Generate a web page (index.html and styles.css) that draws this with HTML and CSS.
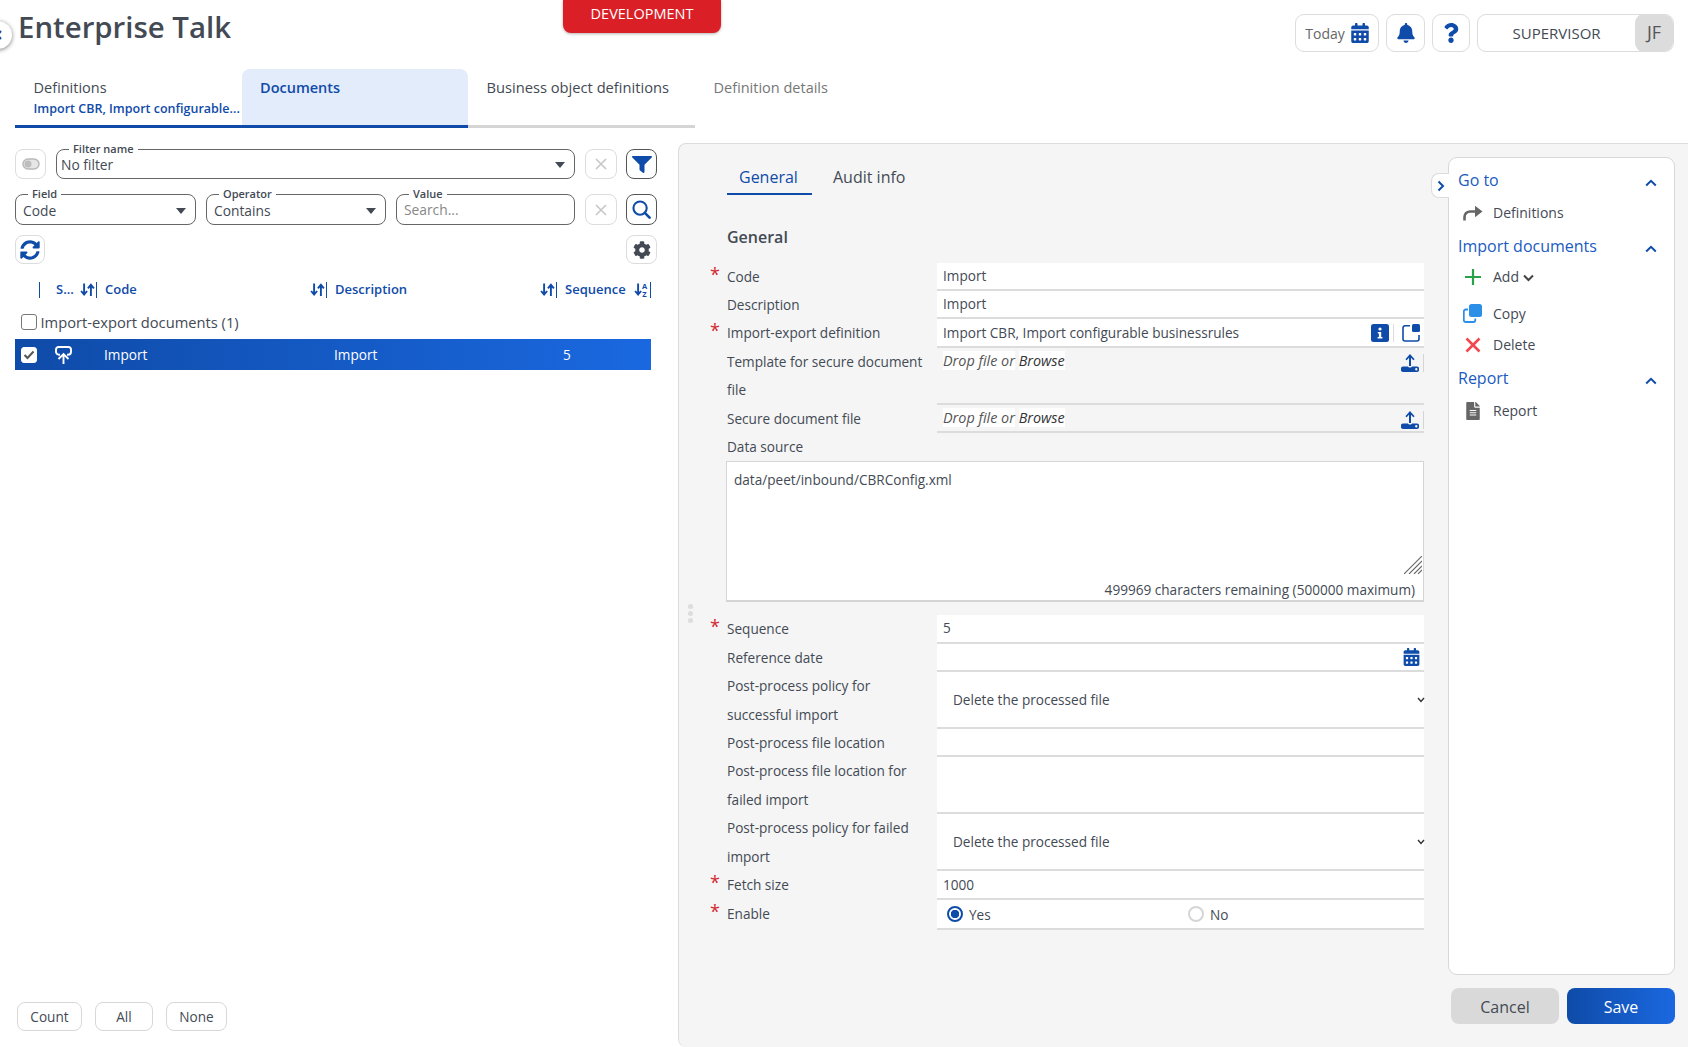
FILE: index.html
```html
<!DOCTYPE html>
<html lang="en">

<head>
    <meta charset="UTF-8">
    <meta name="viewport" content="width=device-width, initial-scale=1.0">
    <title>Enterprise Talk</title>
    <link rel="stylesheet" href="styles.css">
</head>

<body>
    <!-- Icons -->
    <svg class="icon-defs" xmlns="http://www.w3.org/2000/svg">
        <symbol id="i-calendar" viewBox="0 0 448 512"><path d="M0 464c0 26.5 21.5 48 48 48h352c26.5 0 48-21.5 48-48V192H0v272zm320-196c0-6.6 5.4-12 12-12h40c6.6 0 12 5.4 12 12v40c0 6.6-5.4 12-12 12h-40c-6.6 0-12-5.4-12-12v-40zm0 128c0-6.6 5.4-12 12-12h40c6.6 0 12 5.4 12 12v40c0 6.6-5.4 12-12 12h-40c-6.6 0-12-5.4-12-12v-40zM192 268c0-6.6 5.4-12 12-12h40c6.6 0 12 5.4 12 12v40c0 6.6-5.4 12-12 12h-40c-6.6 0-12-5.4-12-12v-40zm0 128c0-6.6 5.4-12 12-12h40c6.6 0 12 5.4 12 12v40c0 6.6-5.4 12-12 12h-40c-6.6 0-12-5.4-12-12v-40zM64 268c0-6.6 5.4-12 12-12h40c6.6 0 12 5.4 12 12v40c0 6.6-5.4 12-12 12H76c-6.6 0-12-5.4-12-12v-40zm0 128c0-6.6 5.4-12 12-12h40c6.6 0 12 5.4 12 12v40c0 6.6-5.4 12-12 12H76c-6.6 0-12-5.4-12-12v-40zM400 64h-48V16c0-8.8-7.2-16-16-16h-32c-8.8 0-16 7.2-16 16v48H160V16c0-8.8-7.2-16-16-16h-32c-8.8 0-16 7.2-16 16v48H48C21.5 64 0 85.5 0 112v48h448v-48c0-26.5-21.5-48-48-48z"/></symbol>
        <symbol id="i-sort" viewBox="0 0 16 16"><path d="M4.6 1.5v10.2M1.6 9l3 3.6 3-3.6M11.4 14V3.5M8.4 6.4l3-3.6 3 3.6" fill="none" stroke="currentColor" stroke-width="1.9"/></symbol>
        <symbol id="i-upload" viewBox="0 0 18 18"><path d="M9 0l4.6 5.2-1.3 1.1L10 3.8V12H8V3.8L5.7 6.3 4.4 5.2z"/><path d="M2.500 12.500H7c.3.7 1 1 2 1s1.700-.3 2-1h4.500a2.700 2.700 0 0 1 0 5.500h-13a2.700 2.700 0 0 1 0-5.500zm12.800 1.600a1.200 1.200 0 1 0 0 2.400 1.200 1.200 0 0 0 0-2.400z" fill-rule="evenodd"/></symbol>
        <symbol id="i-up" viewBox="0 0 12 8"><path d="M1.2 6.500L6 1.800l4.800 4.700" fill="none" stroke="currentColor" stroke-width="2"/></symbol>
        <symbol id="i-x" viewBox="0 0 12 12"><path d="M1 1l10 10M11 1L1 11" fill="none" stroke="currentColor" stroke-width="1.7"/></symbol>
    </svg>

    <div class="app">
        <!-- Header -->
        <header class="topbar">
            <span class="back-circle">
                <svg width="6" height="10" viewBox="0 0 6 10"><path d="M5 1L1.500 5 5 9" fill="none" stroke="#0f4ba8" stroke-width="2"/></svg>
            </span>
            <h1>Enterprise Talk</h1>
            <div class="env-badge">DEVELOPMENT</div>
            <div class="top-actions">
                <div class="top-btn today">Today <svg class="ico-18"><use href="#i-calendar"/></svg></div>
                <div class="top-btn bell">
                    <svg class="ico-18" viewBox="0 0 448 512"><path d="M224 512c35.32 0 63.97-28.65 63.97-64H160.03c0 35.35 28.65 64 63.97 64zm215.39-149.71c-19.32-20.76-55.47-51.99-55.47-154.29 0-77.7-54.48-139.9-127.94-155.16V32c0-17.67-14.32-32-31.98-32s-31.98 14.33-31.98 32v20.84C118.56 68.1 64.08 130.3 64.08 208c0 102.3-36.15 133.53-55.47 154.29-6 6.45-8.66 14.16-8.61 21.71.11 16.4 12.98 32 32.1 32h383.8c19.12 0 32-15.6 32.1-32 .05-7.55-2.61-15.27-8.61-21.71z"/></svg>
                </div>
                <div class="top-btn help">
                    <svg class="ico-18" viewBox="0 0 384 512"><path d="M202.021 0C122.202 0 70.503 32.703 29.914 91.026c-7.363 10.58-5.093 25.086 5.178 32.874l43.138 32.709c10.373 7.865 25.132 6.026 33.253-4.148 25.049-31.381 43.63-49.449 82.757-49.449 30.764 0 68.816 19.799 68.816 49.631 0 22.552-18.617 34.134-48.993 51.164-35.423 19.86-82.299 44.576-82.299 106.405V320c0 13.255 10.745 24 24 24h72.471c13.255 0 24-10.745 24-24v-5.773c0-42.86 125.268-44.645 125.268-160.627C377.504 66.256 286.902 0 202.021 0zM192 373.459c-38.196 0-69.271 31.075-69.271 69.271 0 38.195 31.075 69.27 69.271 69.27s69.271-31.075 69.271-69.271-31.075-69.27-69.271-69.27z"/></svg>
                </div>
                <div class="top-btn user">
                    <span class="user-name">SUPERVISOR</span>
                    <span class="user-initials">JF</span>
                </div>
            </div>
        </header>

        <!-- Main tabs -->
        <nav class="main-tabs">
            <div class="main-tab done">
                <div>Definitions</div>
                <div class="sub">Import CBR, Import configurable...</div>
            </div>
            <div class="main-tab active">Documents</div>
            <div class="main-tab wide">Business object definitions</div>
            <div class="main-tab muted">Definition details</div>
        </nav>

        <div class="content">
            <!-- List side -->
            <section class="list-pane">
                <div class="filter-row first">
                    <div class="square-btn toggle">
                        <svg width="18" height="12" viewBox="0 0 18 12"><rect x="1" y="1" width="16" height="10" rx="5" fill="#e6e6e6" stroke="#b9b9b9" stroke-width="1.5"/><circle cx="6" cy="6" r="3.5" fill="#bdbdbd"/></svg>
                    </div>
                    <div class="outline-field grow">
                        <span class="float-label">Filter name</span>
                        <span>No filter</span>
                        <span class="caret"></span>
                    </div>
                    <div class="square-btn clear"><svg width="12" height="12"><use href="#i-x"/></svg></div>
                    <div class="square-btn strong">
                        <svg width="20" height="17" viewBox="0 0 20 17"><path d="M1 0h18c.9 0 1.300 1 .7 1.600L12.500 8.800V16c0 .8-.8 1.200-1.500.7L8 14.400c-.3-.2-.5-.5-.5-.8V8.800L.3 1.600C-.3 1 .1 0 1 0z"/></svg>
                    </div>
                </div>
                <div class="filter-row second">
                    <div class="outline-field field-col field-name">
                        <span class="float-label">Field</span>
                        <span>Code</span>
                        <span class="caret"></span>
                    </div>
                    <div class="outline-field field-col field-op">
                        <span class="float-label">Operator</span>
                        <span>Contains</span>
                        <span class="caret"></span>
                    </div>
                    <div class="outline-field field-col field-value">
                        <span class="float-label">Value</span>
                        <span class="placeholder">Search...</span>
                    </div>
                    <div class="square-btn clear"><svg width="12" height="12"><use href="#i-x"/></svg></div>
                    <div class="square-btn strong">
                        <svg width="19" height="19" viewBox="0 0 20 20"><circle cx="8.5" cy="8.5" r="7" fill="none" stroke="currentColor" stroke-width="2.2"/><path d="M13.5 13.5l5 5" stroke="currentColor" stroke-width="2.8" stroke-linecap="round"/></svg>
                    </div>
                </div>
                <div class="tool-row">
                    <div class="square-btn refresh">
                        <svg width="20" height="20" viewBox="0 0 512 512"><path d="M370.72 133.28C339.458 104.008 298.888 87.962 255.848 88c-77.458.068-144.328 53.178-162.791 126.85-1.344 5.363-6.122 9.15-11.651 9.15H24.103c-7.498 0-13.194-6.807-11.807-14.176C33.933 94.924 134.813 8 256 8c66.448 0 126.791 26.136 171.315 68.685L463.03 40.97C478.149 25.851 504 36.559 504 57.941V192c0 13.255-10.745 24-24 24H345.941c-21.382 0-32.09-25.851-16.971-40.971l41.75-41.749zM32 296h134.059c21.382 0 32.09 25.851 16.971 40.971l-41.75 41.75c31.262 29.273 71.835 45.319 114.876 45.28 77.418-.07 144.315-53.144 162.787-126.849 1.344-5.363 6.122-9.15 11.651-9.15h57.304c7.498 0 13.194 6.807 11.807 14.176C478.067 417.076 377.187 504 256 504c-66.448 0-126.791-26.136-171.315-68.685L48.97 471.03C33.851 486.149 8 475.441 8 454.059V320c0-13.255 10.745-24 24-24z"/></svg>
                    </div>
                    <div class="square-btn settings">
                        <svg width="18" height="18" viewBox="0 0 512 512"><path d="M487.4 315.7l-42.6-24.6c4.3-23.2 4.3-47 0-70.2l42.6-24.6c4.9-2.8 7.1-8.6 5.5-14-11.1-35.6-30-67.8-54.7-94.6-3.8-4.1-10-5.1-14.8-2.3L380.8 110c-17.9-15.4-38.5-27.3-60.8-35.1V25.8c0-5.6-3.9-10.5-9.4-11.7-36.7-8.2-74.3-7.8-109.2 0-5.5 1.2-9.4 6.1-9.4 11.7V75c-22.2 7.9-42.8 19.8-60.8 35.1L88.7 85.5c-4.9-2.8-11-1.9-14.8 2.3-24.7 26.7-43.6 58.9-54.7 94.6-1.7 5.4.6 11.2 5.5 14L67.3 221c-4.3 23.2-4.3 47 0 70.2l-42.6 24.6c-4.9 2.8-7.1 8.6-5.5 14 11.1 35.6 30 67.8 54.7 94.6 3.8 4.1 10 5.1 14.8 2.3l42.6-24.6c17.9 15.4 38.5 27.3 60.8 35.1v49.2c0 5.6 3.9 10.5 9.4 11.7 36.7 8.2 74.3 7.8 109.2 0 5.5-1.2 9.4-6.1 9.4-11.7v-49.2c22.2-7.9 42.8-19.8 60.8-35.1l42.6 24.6c4.9 2.8 11 1.9 14.8-2.3 24.7-26.7 43.6-58.9 54.7-94.6 1.5-5.5-.7-11.3-5.6-14.1zM256 336c-44.1 0-80-35.9-80-80s35.9-80 80-80 80 35.9 80 80-35.9 80-80 80z"/></svg>
                    </div>
                </div>

                <div class="grid-head">
                    <div class="head-cell"></div>
                    <div class="head-cell status">S...<svg class="sort"><use href="#i-sort"/></svg></div>
                    <div class="head-cell">Code<svg class="sort"><use href="#i-sort"/></svg></div>
                    <div class="head-cell">Description<svg class="sort"><use href="#i-sort"/></svg></div>
                    <div class="head-cell">Sequence
                        <svg class="sort" viewBox="0 0 16 16"><path d="M4.6 1.5v10.2M1.6 9l3 3.6 3-3.6" fill="none" stroke="currentColor" stroke-width="1.9"/><text x="8.6" y="7" font-size="7.5" font-weight="700" fill="currentColor">A</text><text x="8.8" y="15" font-size="7.5" font-weight="700" fill="currentColor">Z</text></svg>
                    </div>
                </div>

                <div class="group-row"><span class="check"></span>Import-export documents (1)</div>

                <div class="grid-row selected">
                    <div class="cell"><span class="check on">
                        <svg width="12" height="10" viewBox="0 0 12 10"><path d="M1.5 5l3 3 6-6.500" fill="none" stroke="#555" stroke-width="2"/></svg>
                    </span></div>
                    <div class="cell row-icon">
                        <svg width="17" height="18" viewBox="0 0 17 18" fill="none" stroke="#fff" stroke-width="1.9"><path d="M5 8.800H4A3 3 0 0 1 1 5.800V3.500a2.500 2.500 0 0 1 2.500-2.500h10A2.500 2.500 0 0 1 16 3.500v2.300a3 3 0 0 1-3 3h-1"/><path d="M8.500 18V8.500M3.500 13l5-5 5 5"/></svg>
                    </div>
                    <div class="cell">Import</div>
                    <div class="cell">Import</div>
                    <div class="cell">5</div>
                </div>

                <div class="list-actions">
                    <div class="small-btn count">Count</div>
                    <div class="small-btn all">All</div>
                    <div class="small-btn none">None</div>
                </div>
            </section>

            <!-- Detail side -->
            <section class="detail-pane">
                <div class="form-col">
                    <span class="drag-handle"></span>
                    <div class="detail-tabs">
                        <div class="detail-tab active">General</div>
                        <div class="detail-tab">Audit info</div>
                    </div>
                    <h2>General</h2>

                    <div class="form-row req">
                        <label>Code</label>
                        <div class="value">Import</div>
                    </div>
                    <div class="form-row">
                        <label>Description</label>
                        <div class="value">Import</div>
                    </div>
                    <div class="form-row req">
                        <label>Import-export definition</label>
                        <div class="value">
                            <span>Import CBR, Import configurable businessrules</span>
                            <span class="value-icons">
                                <svg class="info-ico" viewBox="0 0 18 18"><rect width="18" height="18" rx="2.5" fill="#0f4ba8"/><circle cx="9" cy="5" r="1.6" fill="#fff"/><path d="M6.8 8h3.400v5h1.200v1.500H6.600V13h1.300V9.500H6.800z" fill="#fff"/></svg>
                                <span class="icon-sep"></span>
                                <svg class="window-ico" viewBox="0 0 18 18"><path d="M8 1.800H3A2 2 0 0 0 1 3.800V15a2 2 0 0 0 2 2h12a2 2 0 0 0 2-2v-4" fill="none" stroke="#0f4ba8" stroke-width="1.6"/><rect x="10" y="0" width="8" height="8" rx="1.5" fill="#0f4ba8"/></svg>
                            </span>
                        </div>
                    </div>
                    <div class="form-row">
                        <label>Template for secure document file</label>
                        <div class="value drop">
                            <span class="drop-text"><span>Drop file or</span> <span class="browse">Browse</span></span>
                            <span class="upload-wrap"><svg class="upload-ico"><use href="#i-upload"/></svg></span>
                        </div>
                    </div>
                    <div class="form-row">
                        <label>Secure document file</label>
                        <div class="value drop">
                            <span class="drop-text"><span>Drop file or</span> <span class="browse">Browse</span></span>
                            <span class="upload-wrap"><svg class="upload-ico"><use href="#i-upload"/></svg></span>
                        </div>
                    </div>

                    <div class="form-row plain">
                        <label>Data source</label>
                    </div>
                    <div class="text-area">
                        <div>data/peet/inbound/CBRConfig.xml</div>
                        <svg class="resize-grip" width="18" height="18" viewBox="0 0 18 18"><path d="M0 18L18 0M5 18L18 5M10 18l8-8M14 18l4-4" stroke="#666" stroke-width="1.1"/></svg>
                        <div class="remaining">499969 characters remaining (500000 maximum)</div>
                    </div>

                    <div class="form-row req">
                        <label>Sequence</label>
                        <div class="value">5</div>
                    </div>
                    <div class="form-row">
                        <label>Reference date</label>
                        <div class="value"><span></span><svg class="date-ico"><use href="#i-calendar"/></svg></div>
                    </div>
                    <div class="form-row">
                        <label>Post-process policy for successful import</label>
                        <div class="value select">
                            <span>Delete the processed file</span>
                            <svg class="select-arrow" width="8" height="6" viewBox="0 0 8 6"><path d="M1 1l3 3.500L7 1" fill="none" stroke="#333" stroke-width="1.4"/></svg>
                        </div>
                    </div>
                    <div class="form-row">
                        <label>Post-process file location</label>
                        <div class="value"></div>
                    </div>
                    <div class="form-row">
                        <label>Post-process file location for failed import</label>
                        <div class="value"></div>
                    </div>
                    <div class="form-row">
                        <label>Post-process policy for failed import</label>
                        <div class="value select">
                            <span>Delete the processed file</span>
                            <svg class="select-arrow" width="8" height="6" viewBox="0 0 8 6"><path d="M1 1l3 3.500L7 1" fill="none" stroke="#333" stroke-width="1.4"/></svg>
                        </div>
                    </div>
                    <div class="form-row req">
                        <label>Fetch size</label>
                        <div class="value">1000</div>
                    </div>
                    <div class="form-row req">
                        <label>Enable</label>
                        <div class="value radios">
                            <span class="radio-item"><span class="radio on"></span>Yes</span>
                            <span class="radio-item"><span class="radio"></span>No</span>
                        </div>
                    </div>
                </div>

                <div class="side-col">
                    <div class="side-toggle">
                        <svg width="8" height="12" viewBox="0 0 8 12"><path d="M1.5 1.500L6 6l-4.500 4.500" fill="none" stroke="#0f4ba8" stroke-width="2"/></svg>
                    </div>
                    <div class="side-box">
                        <div class="side-title">Go to<svg class="side-up"><use href="#i-up"/></svg></div>
                        <div class="side-item goto">
                            <svg width="20" height="16" viewBox="0 0 20 16"><path d="M1.5 15.500V12c0-3.500 2.500-5.500 6-5.500h6" fill="none" stroke="#666" stroke-width="2.6"/><path d="M12 .8L19.500 6.500 12 12.200z" fill="#666"/></svg>
                            <span>Definitions</span>
                        </div>
                        <div class="side-title import">Import documents<svg class="side-up"><use href="#i-up"/></svg></div>
                        <div class="side-item add">
                            <svg width="18" height="18" viewBox="0 0 18 18"><path d="M9 1v16M1 9h16" stroke="#27a24a" stroke-width="2.2"/></svg>
                            <span>Add</span>
                            <svg class="add-arrow" width="11" height="8" viewBox="0 0 11 8"><path d="M1 1.500l4.500 4.500L10 1.500" fill="none" stroke="#444" stroke-width="2"/></svg>
                        </div>
                        <div class="side-item copy">
                            <svg width="19" height="19" viewBox="0 0 19 19"><path d="M5 5.500H2.800a2 2 0 0 0-2 2V16a2 2 0 0 0 2 2h7.500a2 2 0 0 0 2-2v-1.500" fill="none" stroke="#2b8fe8" stroke-width="1.8"/><rect x="6" y="0" width="13" height="13" rx="2.5" fill="#2b8fe8"/></svg>
                            <span>Copy</span>
                        </div>
                        <div class="side-item delete">
                            <svg width="18" height="18" viewBox="0 0 18 18"><path d="M2.5 2.500l13 13M15.500 2.500l-13 13" stroke="#f2474f" stroke-width="2.6"/></svg>
                            <span>Delete</span>
                        </div>
                        <div class="side-title report">Report<svg class="side-up"><use href="#i-up"/></svg></div>
                        <div class="side-item">
                            <svg width="18" height="18" viewBox="0 0 384 512"><path fill="#666" d="M224 136V0H24C10.7 0 0 10.7 0 24v464c0 13.3 10.7 24 24 24h336c13.3 0 24-10.7 24-24V160H248c-13.2 0-24-10.8-24-24zm64 236c0 6.6-5.4 12-12 12H108c-6.6 0-12-5.4-12-12v-8c0-6.6 5.4-12 12-12h168c6.6 0 12 5.4 12 12v8zm0-64c0 6.6-5.4 12-12 12H108c-6.6 0-12-5.4-12-12v-8c0-6.6 5.4-12 12-12h168c6.6 0 12 5.4 12 12v8zm0-72v8c0 6.6-5.4 12-12 12H108c-6.6 0-12-5.4-12-12v-8c0-6.6 5.4-12 12-12h168c6.6 0 12 5.4 12 12zm96-114.1v6.1H256V0h6.1c6.4 0 12.5 2.5 17 7l97.9 98c4.5 4.5 7 10.6 7 16.9z"/></svg>
                            <span>Report</span>
                        </div>
                    </div>
                    <div class="form-actions">
                        <div class="action-btn cancel">Cancel</div>
                        <div class="action-btn save">Save</div>
                    </div>
                </div>
            </section>
        </div>
    </div>
</body>

</html>
```

FILE: styles.css
```css
/* General Styles */
* {
    box-sizing: border-box;
}

body {
    font-family: "Open Sans", "Noto Sans", sans-serif;
    font-size: 13.6px;
    margin: 0;
    padding: 0;
    background-color: #ffffff;
    color: #434a54;
    overflow: hidden;
}

.icon-defs {
    display: none;
}

.app {
    display: flex;
    flex-direction: column;
    height: 1047px;
    overflow: hidden;
}

/* Header */
.topbar {
    position: relative;
    display: flex;
    justify-content: space-between;
    height: 69px;
    padding: 14px 14px 0 18px;
}

.topbar h1 {
    margin: -5px 0 0;
    font-size: 29.4px;
    font-weight: 600;
    line-height: 36px;
    color: #434a54;
}

.back-circle {
    position: absolute;
    left: -16px;
    top: 21px;
    display: flex;
    align-items: center;
    justify-content: flex-end;
    width: 28px;
    height: 28px;
    padding-right: 10px;
    border-radius: 50%;
    background-color: #fff;
    box-shadow: 0 1px 4px rgba(0, 0, 0, 0.5);
}

.env-badge {
    position: absolute;
    left: 563px;
    top: 0;
    width: 158px;
    height: 33px;
    padding-top: 4px;
    background-color: #da1f26;
    border-radius: 0 0 8px 8px;
    box-shadow: 0 1px 3px rgba(0, 0, 0, 0.3);
    color: #fff;
    font-size: 14.5px;
    line-height: 20px;
    text-align: center;
}

.top-actions {
    display: flex;
    gap: 7px;
    height: 38px;
}

.top-btn {
    display: flex;
    align-items: center;
    justify-content: center;
    border: 1px solid #dcdcdc;
    border-radius: 9px;
    fill: #0f4ba8;
    background-color: #fff;
}

.ico-18 {
    width: 18px;
    height: 20px;
}

.today {
    width: 84px;
    gap: 6px;
    font-size: 14px;
    color: #666;
}

.bell {
    width: 39px;
}

.help {
    width: 38px;
}

.user {
    width: 197px;
    justify-content: flex-start;
    overflow: hidden;
}

.user-name {
    width: 158px;
    font-size: 15px;
    font-weight: 500;
    text-align: center;
    color: #434a54;
}

.user-initials {
    width: 38px;
    height: 38px;
    background-color: #dcdcdc;
    border-radius: 9px;
    font-size: 18px;
    line-height: 36px;
    text-align: center;
    color: #555;
}

/* Main tabs */
.main-tabs {
    display: flex;
    width: 680px;
    height: 59px;
    margin-left: 15px;
    border-bottom: 3px solid #d5d5d5;
}

.main-tab {
    flex: none;
    width: 227px;
    height: 59px;
    padding: 7px 0 0 18.5px;
    font-size: 14.5px;
    line-height: 24px;
    color: #434a54;
}

.main-tab.done {
    border-bottom: 3px solid #0f4ba8;
}

.main-tab .sub {
    font-size: 12.5px;
    font-weight: 600;
    line-height: 18px;
    color: #0f4ba8;
    white-space: nowrap;
}

.main-tab.active {
    width: 226px;
    padding-left: 18px;
    background-color: #e3ecfa;
    border-radius: 8px 8px 0 0;
    border-bottom: 3px solid #0f4ba8;
    font-weight: 600;
    color: #0f4ba8;
}

.main-tab.wide {
    padding-top: 6px;
    font-size: 14.7px;
}

.main-tab.muted {
    color: #777;
}

/* Content */
.content {
    flex: 1;
    display: flex;
    min-height: 0;
}

.list-pane {
    display: flex;
    flex-direction: column;
    flex: none;
    width: 678px;
    padding: 21px 21px 16px 15px;
}

.filter-row {
    display: flex;
    gap: 10px;
}

.filter-row.first {
    height: 30px;
}

.filter-row.second {
    height: 31px;
    margin-top: 15px;
}

.tool-row {
    display: flex;
    justify-content: space-between;
    height: 29px;
    margin-top: 10px;
}

.square-btn {
    display: flex;
    flex: none;
    align-items: center;
    justify-content: center;
    width: 31px;
    border: 1px solid #dcdcdc;
    border-radius: 8px;
    fill: #0f4ba8;
    color: #0f4ba8;
}

.square-btn.strong {
    margin-left: -1px;
    border-color: #555;
}

.square-btn.clear {
    width: 32px;
    color: #c8c8c8;
}

.square-btn.refresh {
    width: 30px;
}

.square-btn.settings {
    fill: #434a54;
}

.outline-field {
    position: relative;
    display: flex;
    align-items: center;
    justify-content: space-between;
    padding: 2px 9px 0 4px;
    border: 1px solid #666;
    border-radius: 8px;
    font-size: 13.8px;
    line-height: 18px;
    color: #434a54;
}

.grow {
    flex: 1;
}

.field-col {
    padding-left: 7px;
}

.field-name {
    width: 181px;
}

.field-op {
    width: 180px;
}

.field-value {
    width: 179px;
}

.float-label {
    position: absolute;
    left: 12px;
    top: -8px;
    padding: 0 4px;
    background-color: #fff;
    font-size: 11px;
    font-weight: 600;
    line-height: 14px;
}

.caret {
    width: 0;
    height: 0;
    border-left: 5px solid transparent;
    border-right: 5px solid transparent;
    border-top: 6px solid #434a54;
}

.placeholder {
    margin-top: -2px;
    color: #888;
}

/* Grid */
.grid-head,
.grid-row {
    display: grid;
    grid-template-columns: 25px 57px 230px 230px 94px;
    width: 636px;
}

.grid-head {
    height: 16px;
    margin-top: 18px;
    color: #0f4ba8;
    font-size: 13px;
    font-weight: 600;
    line-height: 14px;
}

.head-cell {
    display: flex;
    align-items: flex-start;
    justify-content: space-between;
    padding: 0 0 0 8px;
    border-right: 1px solid #0f4ba8;
}

.head-cell.status {
    padding-left: 16px;
}

.sort {
    width: 17px;
    height: 16px;
    flex: none;
}

.group-row {
    display: flex;
    align-items: center;
    height: 24px;
    margin-top: 12px;
    padding-left: 6px;
    font-size: 14.7px;
    color: #434a54;
}

.check {
    display: inline-flex;
    flex: none;
    align-items: center;
    justify-content: center;
    width: 16px;
    height: 16px;
    margin-right: 3.5px;
    border: 1px solid #777;
    border-radius: 3px;
    background-color: #fff;
}

.check.on {
    border-color: #fff;
}

.grid-row {
    height: 31px;
    margin-top: 5px;
    background: linear-gradient(90deg, #0f4ba8, #1a68e0);
    color: #fff;
    line-height: 31px;
}

.cell {
    display: flex;
    align-items: center;
    padding-left: 7px;
}

.cell:last-child {
    padding-left: 6px;
}

.cell.row-icon {
    padding-left: 15px;
}

.cell:first-child {
    padding-left: 6px;
}

.list-actions {
    display: flex;
    margin-top: auto;
    padding-left: 2px;
}

.small-btn {
    height: 29px;
    border: 1px solid #d8d8d8;
    border-radius: 8px;
    text-align: center;
    line-height: 27px;
}

.small-btn.count {
    width: 65px;
}

.small-btn.all {
    width: 58px;
    margin-left: 13px;
}

.small-btn.none {
    width: 61px;
    margin-left: 13px;
}

/* Detail pane */
.detail-pane {
    display: flex;
    flex: 1;
    margin-top: 15px;
    background-color: #f5f5f5;
    border: 1px solid #dcdcdc;
    border-right: none;
    border-bottom: none;
    border-radius: 8px 0 0 8px;
}

.form-col {
    position: relative;
    flex: none;
    width: 751px;
    padding: 16px 6px 0 31px;
}

.drag-handle {
    position: absolute;
    left: 9px;
    top: 460px;
    width: 5px;
    height: 5px;
    background-color: #ddd;
    border-radius: 50%;
    box-shadow: 0 7px 0 #ddd, 0 14px 0 #ddd;
}

.detail-tabs {
    display: flex;
    height: 35px;
    margin-left: 17px;
}

.detail-tab {
    padding: 3px 12px 0;
    margin-right: 9px;
    font-size: 16px;
    line-height: 28px;
    color: #434a54;
}

.detail-tab.active {
    width: 85px;
    border-bottom: 2px solid #0f4ba8;
    font-weight: 500;
    color: #0f4ba8;
}

h2 {
    height: 67.5px;
    margin: 0;
    padding: 30px 0 0 17px;
    font-size: 16px;
    font-weight: 600;
    line-height: 24px;
    color: #434a54;
}

.form-row {
    display: flex;
    position: relative;
    padding-left: 17px;
}

.form-row.req::before {
    content: "*";
    position: absolute;
    left: 0;
    top: 1px;
    color: #d3272e;
    font-size: 18px;
    line-height: 20px;
}

.form-row label {
    flex: none;
    width: 210px;
    padding-right: 6px;
    line-height: 28.45px;
}

.value {
    display: flex;
    flex: 1;
    align-items: center;
    justify-content: space-between;
    min-width: 0;
    min-height: 28.45px;
    padding: 0 6px;
    background-color: #fff;
    border-bottom: 2px solid #dcdcdc;
    line-height: 26px;
}

.value-icons {
    display: flex;
    align-items: center;
}

.info-ico {
    width: 18px;
    height: 18px;
}

.icon-sep {
    width: 1px;
    height: 18px;
    margin: 0 8px 0 4px;
    background-color: #ddd;
}

.window-ico {
    width: 18px;
    height: 18px;
    margin-right: -2px;
}

.date-ico {
    width: 17px;
    height: 18px;
    fill: #0f4ba8;
    margin-right: -2px;
}

.value.drop {
    align-items: flex-start;
    padding-right: 0;
    background-color: transparent;
}

.drop-text {
    font-size: 14.4px;
    font-style: italic;
    color: #555;
}

.drop-text span {
    background-color: #fff;
}

.browse {
    color: #333;
}

.upload-wrap {
    display: flex;
    margin-top: 6px;
    padding-right: 4px;
    border-right: 1px solid #d5d5d5;
}

.upload-ico {
    width: 18px;
    height: 18px;
    fill: #0f4ba8;
}

.value.select {
    padding: 0 0 0 16px;
}

.select-arrow {
    margin-right: -1px;
}

.radios {
    justify-content: flex-start;
    padding: 2px 0 0 10px;
}

.radio-item {
    display: flex;
    flex: none;
    align-items: center;
    width: 241px;
    color: #434a54;
}

.radio {
    width: 16px;
    height: 16px;
    margin: -2px 6px 0 0;
    border: 2px solid #d5d5d5;
    border-radius: 50%;
    background-color: #fff;
}

.radio.on {
    border-color: #0f4ba8;
    background: radial-gradient(circle, #0f4ba8 0 4px, #fff 4.5px);
}

.form-row.plain label {
    line-height: 28px;
}

.text-area {
    position: relative;
    display: flex;
    flex-direction: column;
    height: 141px;
    margin: 0 0 13px 16px;
    padding: 5.5px 8px 0 7px;
    background-color: #fff;
    border: 1px solid #d5d5d5;
    border-bottom-width: 2px;
    line-height: 24px;
}

.resize-grip {
    position: absolute;
    right: 1px;
    bottom: 26px;
}

.remaining {
    margin-top: auto;
    text-align: right;
    line-height: 21px;
    color: #434a54;
}

/* Side column */
.side-col {
    position: relative;
    display: flex;
    flex: 1;
    flex-direction: column;
    padding: 13px 13px 23px 18px;
}

.side-toggle {
    position: absolute;
    left: 1px;
    top: 29px;
    display: flex;
    align-items: center;
    justify-content: center;
    width: 18px;
    height: 25px;
    background-color: #fff;
    border: 1px solid #dcdcdc;
    border-right: none;
    border-radius: 8px 0 0 8px;
}

.side-box {
    flex: 1;
    padding: 8px 17px 0 9px;
    background-color: #fff;
    border: 1px solid #d8d8d8;
    border-radius: 9px;
}

.side-title {
    display: flex;
    align-items: center;
    justify-content: space-between;
    height: 28px;
    font-size: 16px;
    line-height: 28px;
    color: #1a5bc0;
}

.side-title.import {
    margin-top: 4px;
}

.side-title.report {
    margin-top: 4px;
}

.side-up {
    width: 12px;
    height: 8px;
    margin-top: 5px;
    color: #0f4ba8;
}

.side-item {
    display: flex;
    align-items: center;
    height: 31px;
    margin-top: 3px;
    padding-left: 6px;
    font-size: 14px;
}

.side-item svg:first-child {
    flex: none;
    margin-right: 11px;
}

.side-item.goto {
    padding-left: 5px;
}

.side-item.goto svg:first-child {
    margin-right: 10px;
}

.side-item.add {
    margin-top: 1px;
}

.side-item.copy {
    margin-top: 6px;
    padding-left: 5px;
}

.side-item.delete {
    margin-top: 0;
}

.add-arrow {
    margin: 2px 0 0 4px;
}

.form-actions {
    display: flex;
    justify-content: flex-end;
    gap: 8px;
    margin-top: 13px;
}

.action-btn {
    width: 108px;
    height: 36px;
    border-radius: 8px;
    font-size: 16px;
    line-height: 38px;
    text-align: center;
}

.cancel {
    background-color: #d9d9d9;
}

.save {
    background: linear-gradient(90deg, #0f4ba8, #1a68e0);
    color: #fff;
}
```
